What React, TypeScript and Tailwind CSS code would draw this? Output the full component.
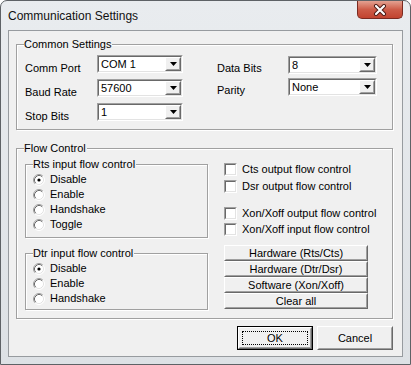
import React from 'react';

const sunkenOuter = 'border border-t-[#a0a0a0] border-l-[#a0a0a0] border-b-white border-r-white';
const sunkenInner = 'border border-t-[#696969] border-l-[#696969] border-b-[#e3e3e3] border-r-[#e3e3e3]';
const raisedOuter = 'border border-t-white border-l-white border-b-[#696969] border-r-[#696969]';
const raisedInner = 'border border-t-[#f0f0f0] border-l-[#f0f0f0] border-b-[#a0a0a0] border-r-[#a0a0a0]';

const Combo: React.FC<{ value: string; width: string }> = ({ value, width }) => (
  <div className={`${sunkenOuter} ${width} h-[18px] shrink-0`}>
    <div className={`${sunkenInner} bg-white h-full flex`}>
      <span className="flex-1 pl-[2px] leading-[14px]">{value}</span>
      <div className={`${raisedOuter} w-[16px] h-full bg-[#f0f0f0]`}>
        <div className={`${raisedInner} h-full flex items-center justify-center`}>
          <svg width="7" height="4" viewBox="0 0 7 4">
            <path d="M0 0h7L3.5 4z" fill="#000" />
          </svg>
        </div>
      </div>
    </div>
  </div>
);

const GroupBox: React.FC<{ title: string; className?: string; children: React.ReactNode }> = ({
  title,
  className = '',
  children,
}) => (
  <div className={`relative border border-[#a0a0a0] shadow-[1px_1px_0_#fff,inset_1px_1px_0_#fff] ${className}`}>
    <span className="absolute left-[7px] -top-[7px] bg-[#f0f0f0] pr-[1px] leading-[13px]">{title}</span>
    {children}
  </div>
);

const Radio: React.FC<{ label: string; checked?: boolean }> = ({ label, checked }) => (
  <div className="h-[15px] flex items-center gap-[5px]">
    <svg width="12" height="12" viewBox="0 0 12 12">
      <circle cx="6" cy="6" r="5" fill="#fff" />
      <path d="M2.11 9.89A5.5 5.5 0 0 1 9.89 2.11" stroke="#a0a0a0" fill="none" />
      <path d="M9.89 2.11A5.5 5.5 0 0 1 2.11 9.89" stroke="#fff" fill="none" />
      <path d="M2.82 9.18A4.5 4.5 0 0 1 9.18 2.82" stroke="#696969" fill="none" />
      <path d="M9.18 2.82A4.5 4.5 0 0 1 2.82 9.18" stroke="#e3e3e3" fill="none" />
      {checked && <circle cx="6" cy="6" r="1.6" fill="#000" />}
    </svg>
    <span className="leading-[15px]">{label}</span>
  </div>
);

const Check: React.FC<{ label: string }> = ({ label }) => (
  <div className="h-[16px] flex items-center gap-[5px]">
    <div className={`${sunkenOuter} w-[13px] h-[13px]`}>
      <div className={`${sunkenInner} bg-white h-full`} />
    </div>
    <span className="leading-[16px]">{label}</span>
  </div>
);

const Btn: React.FC<{ label: string; className?: string; isDefault?: boolean }> = ({
  label,
  className = '',
  isDefault,
}) =>
  isDefault ? (
    <div className={`border border-black ${className}`}>
      <div className={`${raisedOuter} h-full bg-[#f0f0f0]`}>
        <div className={`${raisedInner} h-full p-[2px]`}>
          <div className="h-full border border-dotted border-black flex items-center justify-center">{label}</div>
        </div>
      </div>
    </div>
  ) : (
    <div className={`${raisedOuter} bg-[#f0f0f0] ${className}`}>
      <div className={`${raisedInner} h-full flex items-center justify-center`}>{label}</div>
    </div>
  );

export default function App() {
  return (
    <div className="w-[411px] h-[365px] bg-white">
      <div className="w-[411px] h-[365px] rounded-t-[7px] border border-[#5e6266] bg-gradient-to-b from-[#e9ecef] to-[#dde1e5] flex flex-col overflow-hidden">
        {/* Title bar */}
        <div className="h-[29px] shrink-0 flex items-start">
          <span className="pl-[7px] pt-[7px] text-[12px] leading-[16px] text-[#111] font-['Liberation_Sans',Arial,sans-serif]">
            Communication Settings
          </span>
          <div className="ml-auto mr-[7px] w-[46px] h-[18px] rounded-b-[5px] border border-t-0 border-[#7a2a20] bg-gradient-to-b from-[#e3a191] via-[#cd5c48] to-[#c2432f] flex items-center justify-center">
            <svg width="14" height="12" viewBox="0 0 14 12">
              <path d="M3 2l8 8M11 2l-8 8" stroke="#4a1a14" strokeWidth="4" strokeLinecap="round" />
              <path d="M3 2l8 8M11 2l-8 8" stroke="#fff" strokeWidth="2.2" strokeLinecap="round" />
            </svg>
          </div>
        </div>

        {/* Client area */}
        <div className="mx-[7px] mb-[7px] flex-1 border border-[#979b9f] bg-[#f0f0f0] text-[11px] text-black font-['Liberation_Sans',Arial,sans-serif] flex flex-col pl-[7px] pr-[9px]">
          <GroupBox title="Common Settings" className="mt-[13px] w-[377px] h-[86px] flex pl-[8px] pt-[10px]">
            <div className="flex flex-col gap-[6px]">
              {[
                ['Comm Port', 'COM 1'],
                ['Baud Rate', '57600'],
                ['Stop Bits', '1'],
              ].map(([l, v]) => (
                <div key={l} className="flex h-[18px]">
                  <span className="w-[72px] pt-[7px] leading-[13px]">{l}</span>
                  <Combo value={v} width="w-[86px]" />
                </div>
              ))}
            </div>
            <div className="ml-[34px] pt-[1px] flex flex-col gap-[4px]">
              {[
                ['Data Bits', '8'],
                ['Parity', 'None'],
              ].map(([l, v]) => (
                <div key={l} className="flex h-[18px]">
                  <span className="w-[71px] pt-[6px] leading-[13px]">{l}</span>
                  <Combo value={v} width="w-[89px]" />
                </div>
              ))}
            </div>
          </GroupBox>

          <GroupBox title="Flow Control" className="mt-[18px] w-[377px] h-[171px] flex pl-[8px]">
            <div className="w-[183px] flex flex-col">
              <GroupBox title="Rts input flow control" className="mt-[15px] h-[74px] pl-[7px] pt-[7px]">
                <Radio label="Disable" checked />
                <Radio label="Enable" />
                <Radio label="Handshake" />
                <Radio label="Toggle" />
              </GroupBox>
              <GroupBox title="Dtr input flow control" className="mt-[15px] h-[57px] pl-[7px] pt-[7px]">
                <Radio label="Disable" checked />
                <Radio label="Enable" />
                <Radio label="Handshake" />
              </GroupBox>
            </div>
            <div className="ml-[16px] pt-[12px] flex flex-col">
              <div className="flex flex-col gap-[1px]">
                <Check label="Cts output flow control" />
                <Check label="Dsr output flow control" />
              </div>
              <div className="mt-[11px] flex flex-col">
                <Check label="Xon/Xoff output flow control" />
                <Check label="Xon/Xoff input flow control" />
              </div>
              <div className="mt-[8px] w-[144px] flex flex-col">
                <Btn label="Hardware (Rts/Cts)" className="h-[16px]" />
                <Btn label="Hardware (Dtr/Dsr)" className="h-[16px]" />
                <Btn label="Software (Xon/Xoff)" className="h-[16px]" />
                <Btn label="Clear all" className="h-[16px]" />
              </div>
            </div>
          </GroupBox>

          <div className="mt-[7px] flex justify-end gap-[4px]">
            <Btn label="OK" isDefault className="w-[76px] h-[24px]" />
            <Btn label="Cancel" className="w-[76px] h-[24px]" />
          </div>
        </div>
      </div>
    </div>
  );
}
